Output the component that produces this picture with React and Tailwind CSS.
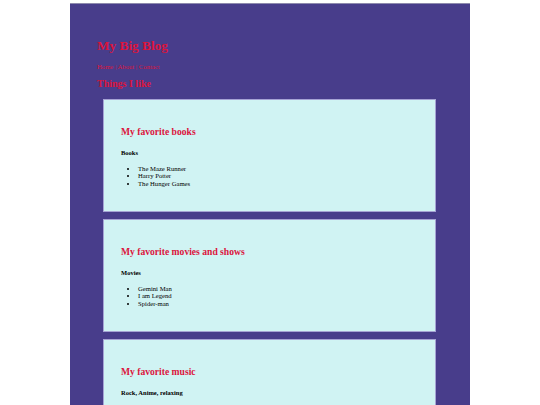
export default function App() {
  const cards = [
    { title: "My favorite books", sub: "Books", items: ["The Maze Runner", "Harry Potter", "The Hunger Games"] },
    { title: "My favorite movies and shows", sub: "Movies", items: ["Gemini Man", "I am Legend", "Spider-man"] },
    { title: "My favorite music", sub: "Rock, Anime, relaxing", items: ["Linkin Park", "Anime openings", "Lo-fi"] },
  ];
  return (
    <div className="min-h-screen bg-white pt-[3px]" style={{ fontFamily: '"Liberation Serif", "Times New Roman", serif' }}>
      <div className="mx-auto w-[400px] border-t border-[#8e8aae] bg-[#483d8b] pl-[27px] pr-[34px] pt-[33.6px] pb-[10px]">
        <h1 className="text-[13.3px] leading-[15.3px] font-bold text-[#dc143c]">My Big Blog</h1>
        <nav className="mt-[10.5px] text-[6.67px] leading-[7.7px] text-[#dc143c]">Home | About | Contact</nav>
        <h2 className="mt-[7.4px] text-[10px] leading-[11.5px] font-bold text-[#dc143c]">Things I like</h2>
        <div className="mt-[9px] ml-[6px] flex flex-col gap-[7px]">
          {cards.map((c) => (
            <section key={c.title} className="border border-[#a6a3d4] bg-[#d0f3f3] pl-[17px] pt-[25.8px] pb-[23.4px] text-black">
              <h2 className="text-[9.6px] leading-[11px] font-bold text-[#dc143c]">{c.title}</h2>
              <h4 className="mt-[12px] text-[6.5px] leading-[7.5px] font-bold">{c.sub}</h4>
              <ul className="mt-[8.3px] list-disc pl-[17px] text-[6.67px] leading-[7.67px]">
                {c.items.map((i) => (
                  <li key={i}>{i}</li>
                ))}
              </ul>
            </section>
          ))}
        </div>
      </div>
    </div>
  );
}
